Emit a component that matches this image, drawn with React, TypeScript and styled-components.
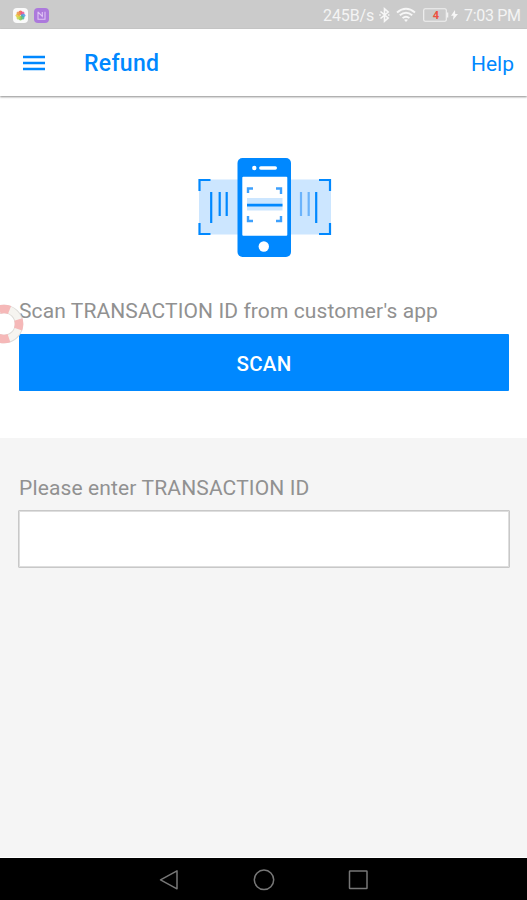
import React from "react";
import styled, { createGlobalStyle } from "styled-components";

const blue = "#0088ff";

const GlobalStyle = createGlobalStyle`
  * { box-sizing: border-box; }
  body { margin: 0; background: #f5f5f5; }
`;

const Screen = styled.div`
  position: relative;
  display: flex;
  flex-direction: column;
  width: 527px;
  height: 900px;
  overflow: hidden;
  background: #f5f5f5;
  font-family: Roboto, "Liberation Sans", sans-serif;
`;

const StatusBar = styled.header`
  display: flex;
  justify-content: space-between;
  align-items: center;
  height: 29px;
  flex: none;
  padding: 1px 7px 0 13px;
  background: #cbcbcb;
  color: #f4f4f4;
`;

const StatusGroup = styled.div<{ $gap: number }>`
  display: flex;
  align-items: center;
  gap: ${(p) => p.$gap}px;
`;

const StatusText = styled.span<{ $width: number; $spacing: number }>`
  width: ${(p) => p.$width}px;
  padding-top: 1px;
  font-size: 16px;
  line-height: 20px;
  letter-spacing: ${(p) => p.$spacing}px;
  white-space: nowrap;
`;

const TopBar = styled.nav`
  position: relative;
  display: flex;
  align-items: center;
  flex: none;
  height: 67px;
  padding: 1px 13px 0 23px;
  background: #fff;
  color: ${blue};
  box-shadow: 0 1px 2px rgba(0, 0, 0, 0.45);
`;

const MenuButton = styled.button`
  display: flex;
  width: 22px;
  height: 16px;
  padding: 0;
  border: 0;
  background: none;
`;

const Title = styled.h1`
  flex: 1;
  margin: 2px 0 0 39px;
  font-size: 23px;
  font-weight: 500;
  line-height: 30px;
  letter-spacing: 0.3px;
`;

const HelpLink = styled.a`
  margin-top: 1px;
  font-size: 21px;
  line-height: 30px;
`;

const ScanSection = styled.section`
  display: flex;
  flex-direction: column;
  flex: none;
  height: 342px;
  padding: 61px 18px 0 19px;
  background: #fff;
`;

const ScanArt = styled.svg`
  align-self: center;
  flex: none;
  display: block;
`;

const Label = styled.label`
  display: block;
  height: 26px;
  font-size: 21px;
  line-height: 26px;
  letter-spacing: 0.1px;
  color: #919191;
  white-space: nowrap;
`;

const ScanLabel = styled(Label)`
  margin: 40px 0 0;
`;

const ScanButton = styled.button`
  height: 57px;
  margin-top: 10px;
  padding: 2px 0 0;
  border: 0;
  border-radius: 1px;
  background: ${blue};
  color: #fff;
  font: 500 20.5px/26px Roboto, "Liberation Sans", sans-serif;
  letter-spacing: 0.3px;
`;

const EntrySection = styled.section`
  flex: 1;
  padding: 37px 17px 0 18px;
  border-bottom: 1px solid #fff;
`;

const EntryLabel = styled(Label)`
  margin-left: 1px;
  letter-spacing: 0.14px;
`;

const EntryInput = styled.input`
  display: block;
  width: 100%;
  height: 58px;
  margin-top: 9px;
  padding: 0 12px;
  border: 1px solid #c8c8c8;
  border-radius: 1px;
  outline: 0;
  background: #fff;
  box-shadow: inset 0 0 0 1px #dedede;
  font: 21px Roboto, "Liberation Sans", sans-serif;
`;

const SystemNav = styled.footer`
  display: flex;
  justify-content: center;
  align-items: center;
  gap: 73px;
  flex: none;
  height: 42px;
  padding-top: 2px;
  background: #000;
`;

const NavIcon = styled.svg`
  display: block;
  width: 22px;
  height: 22px;
  fill: none;
  stroke: #777;
  stroke-width: 1.5;
  stroke-linejoin: round;
`;

const HelpBuoy = styled.svg`
  position: absolute;
  left: -16px;
  top: 304px;
`;

const petals = ["#ef5b4c", "#e65391", "#519ae8", "#43b79b", "#83c553", "#c3d34a", "#e9cd3f", "#ec9748"];

function GalleryIcon() {
  return (
    <svg width="15" height="15" viewBox="0 0 15 15">
      <rect width="15" height="15" rx="4" fill="#fafafa" />
      {petals.map((color, i) => (
        <ellipse key={color} cx="7.5" cy="4.8" rx="1.8" ry="2.3" fill={color} opacity="0.85" transform={`rotate(${i * 45} 7.5 7.5)`} />
      ))}
    </svg>
  );
}

function AppIcon() {
  return (
    <svg width="15" height="15" viewBox="0 0 15 15" fill="none">
      <rect width="15" height="15" rx="4" fill="#ac79dc" />
      <path d="M4 3.8v7.4h7V3.8M4 4l4.3 4.3V4" stroke="#dfc4f5" strokeWidth="1.1" />
    </svg>
  );
}

function BluetoothIcon() {
  return (
    <svg width="12" height="16" viewBox="0 0 12 16" fill="none" stroke="#f7f7f7" strokeWidth="1.6">
      <path d="M2.5 4.5 10.2 11 6.5 14.2V1.8L10.2 5 2.5 11.5" />
      <path d="M1.2 8h1.6M10 8h1.5" />
    </svg>
  );
}

function WifiIcon() {
  return (
    <svg width="20" height="16" viewBox="0 0 20 16" fill="none" stroke="#f7f7f7" strokeWidth="1.9">
      <path d="M1 5.4Q10-2.1 19 5.4M3.8 8.3Q10 3 16.2 8.3M6.6 11.1Q10 8.2 13.4 11.1" />
      <path d="m8 12.8 2 2.2 2-2.2q-2-1.3-4 0Z" fill="#f7f7f7" stroke="none" />
    </svg>
  );
}

function BatteryIcon() {
  return (
    <svg width="36" height="16" viewBox="0 0 36 16" fill="none">
      <rect x="1.7" y="1.7" width="22.6" height="12.5" rx="1.5" stroke="#f1f1f1" strokeWidth="1.1" />
      <path d="M25.5 5.5v5" stroke="#f1f1f1" strokeWidth="1.5" />
      <text x="14" y="12" fill="#ed5140" fontSize="11" fontWeight="700" fontFamily="Roboto, sans-serif" textAnchor="middle">4</text>
      <path d="m33 3-4 5.8h2.5L31 13l5-6h-2.8Z" fill="#f7f7f7" />
    </svg>
  );
}

function MenuIcon() {
  return (
    <svg width="22" height="16" viewBox="0 0 22 16" stroke={blue} strokeWidth="2.4">
      <path d="M0 2h22M0 8h22M0 14h22" />
    </svg>
  );
}

function ScannerIllustration() {
  return (
    <ScanArt width="135" height="101" viewBox="0 0 135 101" fill="none">
      <path d="M2 22.5h132v55H2z" fill="#cce6ff" />
      <g stroke={blue} strokeWidth="2.2">
        <path d="M2.5 34V23h11M2.5 66v11h11M122 23h11v11M122 77h11V66" />
        <path d="M14.2 35v31M22.7 35v24M29.7 35v24M119.2 35v31" />
        <path d="M104 35v24M111.7 35v24" stroke="#6bb3fb" />
      </g>
      <rect x="40.5" y="1" width="53.5" height="99" rx="5" fill={blue} />
      <rect x="45.3" y="19.8" width="45" height="59" rx="1" fill="#fff" />
      <circle cx="57.3" cy="11" r="2.2" fill="#fff" />
      <path d="M63.8 11h14.5" stroke="#fff" strokeWidth="3.4" strokeLinecap="round" />
      <circle cx="66.8" cy="89.5" r="5.2" fill="#fff" />
      <path d="M50 41h35.5v12.5H50z" fill="#cce6ff" />
      <path d="M50 48.1h35.5" stroke={blue} strokeWidth="2.6" />
      <path d="M51 36v-4.5h5M79 31.5h5V37M51 59v5h5M79 64h5v-5" stroke="#3da0fd" strokeWidth="2.4" />
    </ScanArt>
  );
}

function LifeBuoy() {
  return (
    <HelpBuoy width="40" height="40" viewBox="0 0 40 40" fill="none">
      <circle cx="20" cy="20" r="15" stroke="#dddbd7" strokeWidth="8.6" />
      <circle cx="20" cy="20" r="15" stroke="#f6f4f0" strokeWidth="6.8" />
      <circle cx="20" cy="20" r="15" stroke="#f5b8b8" strokeWidth="8.6" strokeDasharray="10.4 13.16" strokeDashoffset="5.2" />
    </HelpBuoy>
  );
}

export default function App() {
  return (
    <Screen>
      <GlobalStyle />
      <StatusBar>
        <StatusGroup $gap={6}>
          <GalleryIcon />
          <AppIcon />
        </StatusGroup>
        <StatusGroup $gap={6}>
          <StatusText $width={49} $spacing={-0.1}>245B/s</StatusText>
          <BluetoothIcon />
          <WifiIcon />
          <BatteryIcon />
          <StatusText $width={56} $spacing={-0.3}>7:03 PM</StatusText>
        </StatusGroup>
      </StatusBar>
      <TopBar>
        <MenuButton aria-label="Menu"><MenuIcon /></MenuButton>
        <Title>Refund</Title>
        <HelpLink>Help</HelpLink>
      </TopBar>
      <ScanSection>
        <ScannerIllustration />
        <ScanLabel as="p">Scan TRANSACTION ID from customer's app</ScanLabel>
        <ScanButton>SCAN</ScanButton>
      </ScanSection>
      <EntrySection>
        <EntryLabel htmlFor="transaction">Please enter TRANSACTION ID</EntryLabel>
        <EntryInput id="transaction" />
      </EntrySection>
      <SystemNav>
        <NavIcon viewBox="0 0 22 22"><path d="M19 1.8v18L2.5 10.8Z" /></NavIcon>
        <NavIcon viewBox="0 0 22 22"><circle cx="11" cy="10.8" r="9.7" /></NavIcon>
        <NavIcon viewBox="0 0 22 22"><rect x="1.5" y="2" width="17.5" height="17.5" rx=".5" /></NavIcon>
      </SystemNav>
      <LifeBuoy />
    </Screen>
  );
}
